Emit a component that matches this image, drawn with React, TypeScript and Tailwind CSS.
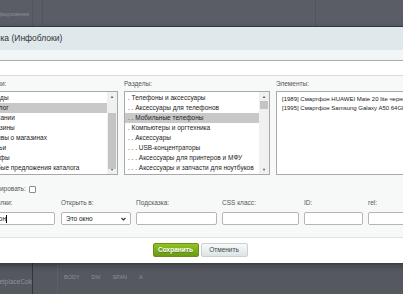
import React from 'react';

const font = { fontFamily: '"Liberation Sans", Arial, sans-serif' };

const iblocks = [
  'Бренды',
  'Каталог',
  'Компании',
  'Магазины',
  'Отзывы о магазинах',
  'Статьи',
  'Тарифы',
  'Особые предложения каталога',
];

const sections = [
  '. Телефоны и аксессуары',
  '. . Аксессуары для телефонов',
  '. . Мобильные телефоны',
  '. Компьютеры и оргтехника',
  '. . Аксессуары',
  '. . . USB-концентраторы',
  '. . . Аксессуары для принтеров и МФУ',
  '. . . Аксессуары и запчасти для ноутбуков',
];

const elements = [
  '[1989] Смартфон HUAWEI Mate 20 lite черный',
  '[1995] Смартфон Samsung Galaxy A50 64GB синий',
];

const ScrollBar: React.FC<{ thumbTop: number; thumbHeight: number }> = ({ thumbTop, thumbHeight }) => (
  <div className="w-[10px] h-full bg-[#f0f0f0] flex flex-col">
    <div className="h-[9px] flex items-center justify-center text-[4px] leading-none text-[#555]">▲</div>
    <div className="flex-1 relative">
      <div className="absolute left-[1px] right-[1px] bg-[#c4c4c4]" style={{ top: thumbTop, height: thumbHeight }} />
    </div>
    <div className="h-[9px] flex items-center justify-center text-[4px] leading-none text-[#555]">▼</div>
  </div>
);

const ListBox: React.FC<{
  items: string[];
  selected: number;
  thumbTop: number;
  thumbHeight: number;
  pad: string;
}> = ({ items, selected, thumbTop, thumbHeight, pad }) => (
  <div className="h-[84px] bg-white border border-[#a9a9a9] flex overflow-hidden">
    <div className="flex-1 pt-[1px] overflow-hidden">
      {items.map((it, i) => (
        <div
          key={it}
          className={`h-[10px] leading-[10px] ${pad} whitespace-nowrap text-[6.5px] text-[#222] ${
            i === selected ? 'bg-[#c8c8c8]' : ''
          }`}
        >
          {it}
        </div>
      ))}
    </div>
    <ScrollBar thumbTop={thumbTop} thumbHeight={thumbHeight} />
  </div>
);

const Field: React.FC<{ label: string; w: string; children?: React.ReactNode }> = ({ label, w, children }) => (
  <div className={`${w} shrink-0 flex flex-col gap-[5px]`}>
    <div className="h-[8px] leading-[8px] text-[6.5px] text-[#555] whitespace-nowrap">{label}</div>
    <div className="h-[13px] bg-white border border-[#b5b5b5] rounded-[2px] flex items-center px-[3px] text-[6.5px] text-[#222] whitespace-nowrap overflow-hidden">
      {children}
    </div>
  </div>
);

export default function App() {
  return (
    <div className="w-[403px] h-[294px] relative overflow-hidden bg-[#474b54]" style={font}>
      {/* page top bar */}
      <div className="h-[27px] bg-[#5b5d66] border-b border-[#3b3e44] flex">
        <div className="w-[33px] border-r border-[#52545c] overflow-hidden flex items-center">
          <span className="-ml-[3px] mt-[4px] text-[5px] text-[#8d9098] whitespace-nowrap">Предложения</span>
        </div>
        <div className="w-[10px] border-r border-[#52545c]" />
        <div className="w-[273px] border-r border-[#52545c]" />
        <div className="flex-1" />
      </div>

      {/* page bottom */}
      <div className="h-[267px] bg-gradient-to-b from-[#3d4450] to-[#565960] flex pt-[236px]">
        <div className="w-[33px] border-r border-[#30353c] overflow-hidden pt-[14px]">
          <span className="-ml-[15px] text-[6.5px] text-[#8e939b] whitespace-nowrap block">MarketplaceCok</span>
        </div>
        <div className="w-[24px]" />
        <div className="flex-1 mt-[2px] border-l border-t border-[#5a616b] flex items-start gap-[5px] pl-[6px] pt-[7px] text-[5.5px] text-[#8c929c]">
          <span>BODY</span>
          <span className="text-[#6b717b]">·</span>
          <span>DIV</span>
          <span className="text-[#6b717b]">·</span>
          <span>SPAN</span>
          <span className="text-[#6b717b]">·</span>
          <span>A</span>
        </div>
      </div>

      {/* dialog */}
      <div className="absolute left-[-40px] top-[27px] w-[480px] h-[236px] bg-white flex flex-col shadow-[0_2px_6px_rgba(0,0,0,0.4)]">
        <div className="h-[23px] shrink-0 bg-[#dfe8eb] pl-[19px] flex items-center text-[8.5px] text-[#333]">
          Ссылка (Инфоблоки)
        </div>
        <div className="h-[11px] shrink-0 bg-[#f1f5f6] border-b border-[#a9abad]" />
        <div className="h-[15px] shrink-0 bg-white border-b border-[#d4dadc]" />

        <div className="h-[162px] shrink-0 bg-[#f7f9f9] border-b border-[#dde3e5] pl-[15px] pt-[4px]">
          <div className="grid grid-cols-[143px_146px_150px] gap-x-[6px]">
            <div className="flex flex-col gap-[3px]">
              <div className="h-[8px] leading-[8px] text-[6.5px] text-[#555] -ml-[5px]">Инфоблоки:</div>
              <ListBox items={iblocks} selected={1} thumbTop={12} thumbHeight={56} pad="pl-[9px]" />
            </div>
            <div className="flex flex-col gap-[3px]">
              <div className="h-[8px] leading-[8px] text-[6.5px] text-[#555]">Разделы:</div>
              <ListBox items={sections} selected={2} thumbTop={0} thumbHeight={8} pad="pl-[3px]" />
            </div>
            <div className="flex flex-col gap-[3px]">
              <div className="h-[8px] leading-[8px] text-[6.5px] text-[#555]">Элементы:</div>
              <div className="h-[84px] bg-white border border-[#a9a9a9] pt-[3px] overflow-hidden">
                {elements.map((e) => (
                  <div key={e} className="h-[9px] leading-[9px] pl-[5px] whitespace-nowrap text-[6px] text-[#222]">
                    {e}
                  </div>
                ))}
              </div>
            </div>
          </div>

          <div className="mt-[10px] h-[8px] -ml-[6px] flex items-center gap-[3px] text-[6.5px] text-[#555]">
            <span>Не индексировать:</span>
            <div className="w-[7px] h-[7px] bg-white border border-[#8a8a8a] rounded-[1px]" />
          </div>

          <div className="mt-[6px] flex gap-[5px]">
            <div className="w-[80px] shrink-0 flex flex-col gap-[5px]">
              <div className="h-[8px] leading-[8px] text-[6.5px] text-[#555] whitespace-nowrap -ml-[4px]">Текст ссылки:</div>
              <div className="h-[13px] bg-white border border-[#b5b5b5] rounded-[2px] flex items-center px-[3px] text-[6.5px] text-[#222] whitespace-nowrap overflow-hidden">
                <span>Телефон</span>
                <span className="w-px h-[8px] bg-[#111]" />
              </div>
            </div>
            <div className="w-[70px] shrink-0 flex flex-col gap-[5px] ml-[1px]">
              <div className="h-[8px] leading-[8px] text-[6.5px] text-[#555]">Открыть в:</div>
              <div className="h-[13px] bg-white border border-[#b5b5b5] rounded-[2px] flex items-center justify-between px-[4px] text-[6.5px] text-[#222]">
                <span>Это окно</span>
                <svg width="5" height="4" viewBox="0 0 5 4">
                  <path d="M0.5 1 L2.5 3 L4.5 1" stroke="#333" strokeWidth="1.2" fill="none" />
                </svg>
              </div>
            </div>
            <Field label="Подсказка:" w="w-[81px]" />
            <Field label="CSS класс:" w="w-[77px]" />
            <Field label="ID:" w="w-[59px]" />
            <Field label="rel:" w="w-[60px]" />
          </div>
        </div>

        <div className="flex-1 flex items-center justify-center gap-[2px] bg-white pb-[2px]">
          <div className="w-[46px] h-[14px] rounded-[2px] bg-gradient-to-b from-[#92c323] to-[#6a9a12] border border-[#6a9016] flex items-center justify-center text-[6.5px] font-bold text-white [text-shadow:0_1px_0_rgba(0,0,0,0.3)]">
            Сохранить
          </div>
          <div className="w-[47px] h-[14px] rounded-[2px] bg-gradient-to-b from-[#f8fafa] to-[#dde4e6] border border-[#c9d0d2] flex items-center justify-center text-[6.5px] text-[#444]">
            Отменить
          </div>
        </div>
      </div>
    </div>
  );
}
